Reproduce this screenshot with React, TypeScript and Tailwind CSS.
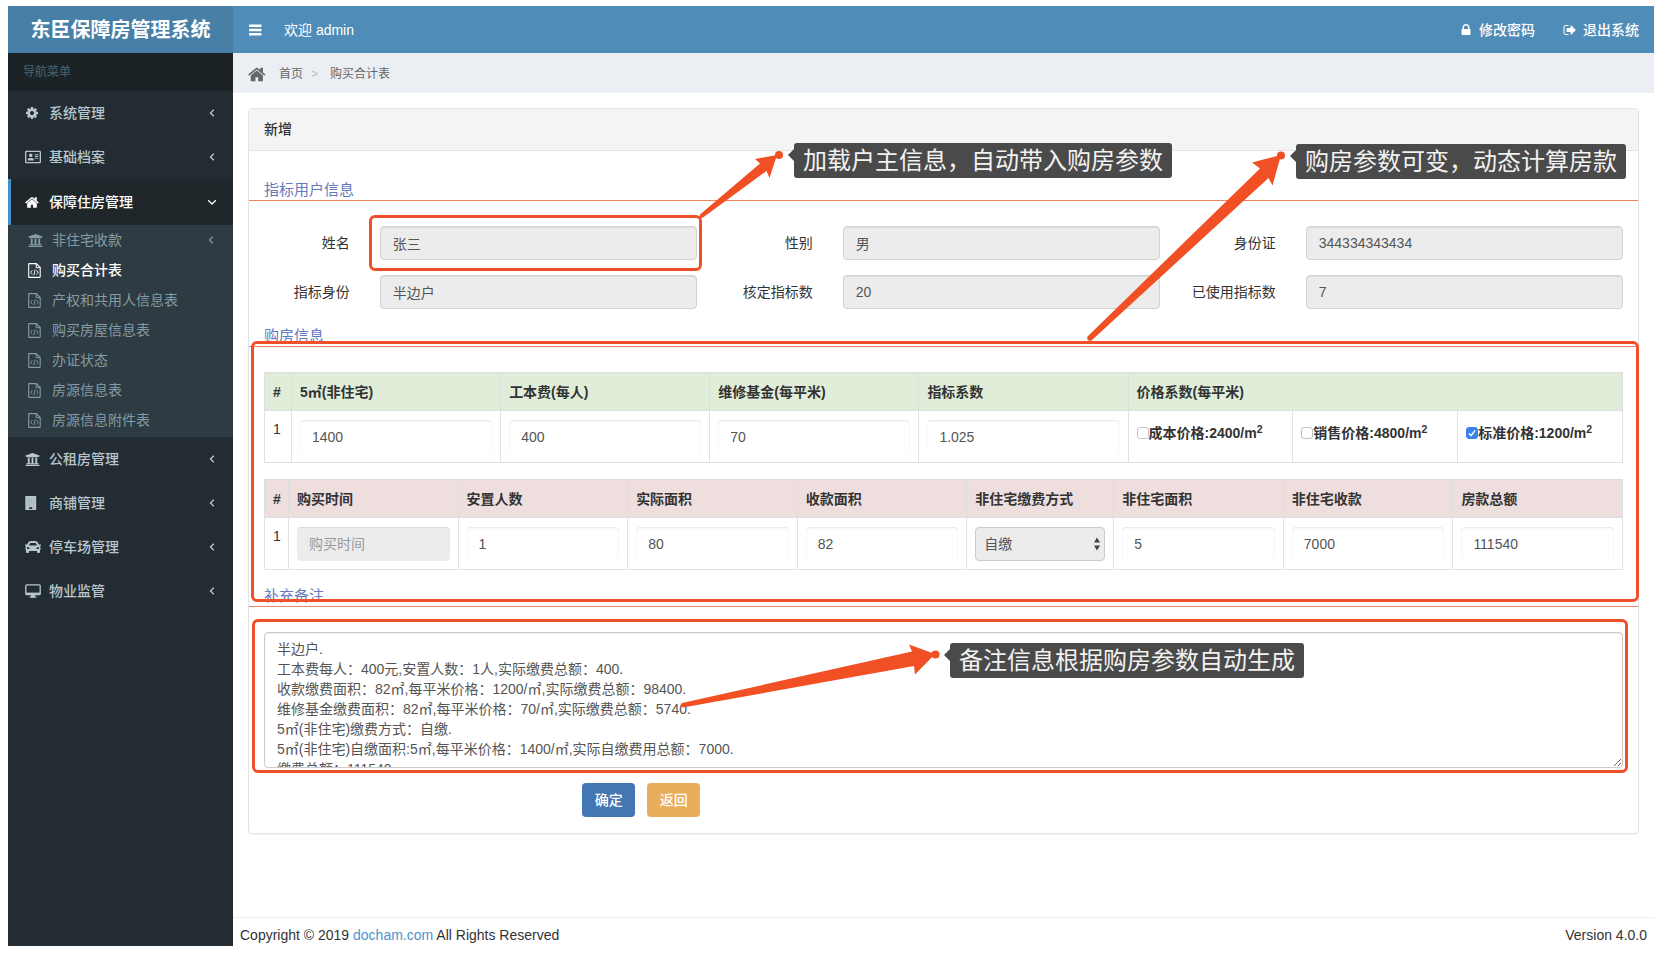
import type { ReactNode } from 'react';
import { FaCar, FaRegAddressCard, FaUniversity } from 'react-icons/fa';

type IconProps = { className?: string };

function Glyph({ d, className }: { d: string; className?: string }) {
  return (
    <svg viewBox="0 0 1792 1792" className={className} fill="currentColor" aria-hidden="true">
      <path d={d} />
    </svg>
  );
}

const HOME =
  'M1408 992v480q0 26-19 45t-45 19h-384v-384h-256v384h-384q-26 0-45-19t-19-45v-480q0-1 .5-3t.5-3l575-474 575 474q1 2 1 6zm223-69l-62 74q-8 9-21 11h-3q-13 0-21-7l-692-577-692 577q-12 8-24 7-13-2-21-11l-62-74q-8-10-7-23.5t11-21.5l719-599q32-26 76-26t76 26l244 204v-195q0-14 9-23t23-9h192q14 0 23 9t9 23v408l219 182q10 8 11 21.5t-7 23.5z';
const COG =
  'M1152 896q0-106-75-181t-181-75-181 75-75 181 75 181 181 75 181-75 75-181zm512-109v222q0 12-8 23t-20 13l-185 28q-19 54-39 91 35 50 107 138 10 12 10 25t-9 23q-27 37-99 108t-94 71q-12 0-26-9l-138-108q-44 23-91 38-16 136-29 186-7 28-36 28h-222q-14 0-24.5-8.5t-11.5-21.5l-28-184q-49-16-90-37l-141 107q-10 9-25 9-14 0-25-11-126-114-165-168-7-10-7-23 0-12 8-23 15-21 51-66.5t54-70.5q-27-50-41-99l-183-27q-13-2-21-12.5t-8-23.5v-222q0-12 8-23t19-13l186-28q14-46 39-92-40-57-107-138-10-12-10-24 0-10 9-23 26-36 98.5-107.5t94.5-71.5q13 0 26 10l138 107q44-23 91-38 16-136 29-186 7-28 36-28h222q14 0 24.5 8.5t11.5 21.5l28 184q49 16 90 37l142-107q9-9 24-9 13 0 25 10 129 119 165 170 7 8 7 22 0 12-8 23-15 21-51 66.5t-54 70.5q26 50 41 98l183 28q13 2 21 12.5t8 23.5z';
const LOCK =
  'M640 768h512v-192q0-106-75-181t-181-75-181 75-75 181v192zm832 96v576q0 40-28 68t-68 28h-960q-40 0-68-28t-28-68v-576q0-40 28-68t68-28h32v-192q0-184 132-316t316-132 316 132 132 316v192h32q40 0 68 28t28 68z';
const SIGN_OUT =
  'M704 1440q0 4 1 20t.5 26.5-3 23.5-10 19.5-20.5 6.5h-320q-119 0-203.5-84.5t-84.5-203.5v-704q0-119 84.5-203.5t203.5-84.5h320q13 0 22.5 9.5t9.5 22.5q0 4 1 20t.5 26.5-3 23.5-10 19.5-20.5 6.5h-320q-66 0-113 47t-47 113v704q0 66 47 113t113 47h312l11.5 1 11.5 3 8 5.5 7 9 2 13.5zm928-544q0 26-19 45l-544 544q-19 19-45 19t-45-19-19-45v-288h-448q-26 0-45-19t-19-45v-384q0-26 19-45t45-19h448v-288q0-26 19-45t45-19 45 19l544 544q19 19 19 45z';

const HomeIcon = ({ className }: IconProps) => <Glyph d={HOME} className={className} />;
const CogIcon = ({ className }: IconProps) => <Glyph d={COG} className={className} />;

function BarsIcon({ className }: IconProps) {
  return (
    <svg viewBox="0 0 14 14" className={className} fill="currentColor" aria-hidden="true">
      <rect x="1" y="1.500" width="12.500" height="2.500" rx="0.500" />
      <rect x="1" y="5.800" width="12.500" height="2.500" rx="0.500" />
      <rect x="1" y="10.100" width="12.500" height="2.500" rx="0.500" />
    </svg>
  );
}

function DesktopIcon({ className }: IconProps) {
  return (
    <svg viewBox="0 0 16 14" className={className} fill="none" stroke="currentColor" aria-hidden="true">
      <rect x="0.8" y="0.8" width="14.4" height="9.9" rx="1" strokeWidth="1.3" />
      <path d="M0.8 9.6h14.4" strokeWidth="2" />
      <path d="M6.2 10.5h3.6l.4 2.6H5.8z" fill="currentColor" stroke="none" />
      <path d="M4.6 13.2h6.8" strokeWidth="1.2" />
    </svg>
  );
}

function BuildingIcon({ className }: IconProps) {
  return (
    <svg viewBox="0 0 14 14" className={className} aria-hidden="true">
      <path
        fillRule="evenodd"
        fill="currentColor"
        d="M.9 0h9.700q.6 0 .6.6v12.800q0 .6-.6.6H.9q-.6 0-.6-.6V.6Q.3 0 .9 0zM4.200 11.200V13h3.100v-1.800z"
      />
      <path
        stroke="#232c33"
        strokeOpacity="0.45"
        strokeWidth="0.7"
        strokeDasharray="0.8 1.300"
        d="M2.300 2.500h7.200M2.300 4.700h7.200M2.300 6.900h7.200M2.300 9.100h7.200"
      />
    </svg>
  );
}

function FileCodeIcon({ className }: IconProps) {
  return (
    <svg viewBox="0 0 13 15" className={className} fill="none" stroke="currentColor" aria-hidden="true">
      <path d="M1.300.6h7l3.900 3.900v9.300q0 .6-.6.6H1.300q-.6 0-.6-.6V1.200q0-.6.6-.6z" strokeWidth="1.1" />
      <path d="M8.200.7v4h4" strokeWidth="1" />
      <path d="M4.300 7.200 2.800 9.300l1.500 2.100M8.600 7.200l1.500 2.100-1.500 2.100M7.100 6.400l-1.200 5.800" strokeWidth="0.900" />
    </svg>
  );
}

function Chevron({ open = false }: { open?: boolean }) {
  return (
    <svg
      viewBox="0 0 10 10"
      className="ml-auto size-2.5 shrink-0"
      fill="none"
      stroke="currentColor"
      strokeWidth="1.3"
      aria-hidden="true"
    >
      <path d={open ? 'M1.2 3.2 5 7l3.8-3.8' : 'M6.800 1.800 3.500 5l3.300 3.200'} />
    </svg>
  );
}

type Entry = { label: string; icon: (p: IconProps) => ReactNode; iconClass: string };

const before: Entry[] = [
  { label: '系统管理', icon: CogIcon, iconClass: 'size-3.5' },
  { label: '基础档案', icon: (p) => <FaRegAddressCard {...p} />, iconClass: 'size-4' },
];
const after: Entry[] = [
  { label: '公租房管理', icon: (p) => <FaUniversity {...p} />, iconClass: 'size-[15px]' },
  { label: '商铺管理', icon: BuildingIcon, iconClass: 'size-3.5' },
  { label: '停车场管理', icon: (p) => <FaCar {...p} />, iconClass: 'size-4' },
  { label: '物业监管', icon: DesktopIcon, iconClass: 'size-4' },
];
const files = ['购买合计表', '产权和共用人信息表', '购买房屋信息表', '办证状态', '房源信息表', '房源信息附件表'];

function NavItem({ entry }: { entry: Entry }) {
  const Icon = entry.icon;
  return (
    <li>
      <a href="#" className="flex h-11 items-center pr-4 pl-[17px] font-medium text-[#b8c7ce]">
        <span className="flex w-6 shrink-0">
          <Icon className={entry.iconClass} />
        </span>
        {entry.label}
        <Chevron />
      </a>
    </li>
  );
}

function Sidebar() {
  return (
    <aside className="flex w-[225px] shrink-0 flex-col bg-[#232c33]">
      <a href="#" className="flex h-[47px] items-center justify-center bg-[#477fa6] text-xl font-bold text-white">
        东臣保障房管理系统
      </a>
      <nav>
        <h2 className="flex h-[38px] items-center bg-[#1b2327] px-[15px] text-xs text-[#4b646f]">导航菜单</h2>
        <ul>
          {before.map((e) => (
            <NavItem key={e.label} entry={e} />
          ))}
          <li>
            <a
              href="#"
              className="flex h-[46px] items-center border-l-[3px] border-[#4590c4] bg-[#1f272b] pr-4 pl-3.5 font-medium text-white"
            >
              <span className="flex w-6 shrink-0">
                <HomeIcon className="size-[15px]" />
              </span>
              保障住房管理
              <Chevron open />
            </a>
            <ul className="bg-[#2e3b42] pb-0.5 text-[#849ba5]">
              <li>
                <a href="#" className="flex h-[30px] items-center pr-[17px] pl-5">
                  <span className="flex w-6 shrink-0">
                    <FaUniversity className="size-[15px]" />
                  </span>
                  非住宅收款
                  <Chevron />
                </a>
              </li>
              {files.map((label, i) => (
                <li key={label}>
                  <a
                    href="#"
                    className={
                      i === 0
                        ? 'flex h-[30px] items-center pl-5 font-medium text-white'
                        : 'flex h-[30px] items-center pl-5'
                    }
                  >
                    <span className="flex w-6 shrink-0">
                      <FileCodeIcon className="h-[15px] w-[13px]" />
                    </span>
                    {label}
                  </a>
                </li>
              ))}
            </ul>
          </li>
          {after.map((e) => (
            <NavItem key={e.label} entry={e} />
          ))}
        </ul>
      </nav>
    </aside>
  );
}

function Legend({ children }: { children: ReactNode }) {
  return (
    <h3 className="border-b border-[#f0825f] px-[15px] text-[15px] leading-5 text-[#6579bd]">{children}</h3>
  );
}

function Field({ id, label, value, marked = false }: { id: string; label: string; value: string; marked?: boolean }) {
  return (
    <div className="flex items-center">
      <label htmlFor={id} className="w-1/4 pr-[15px] text-right text-[#333]">
        {label}
      </label>
      <div className="relative w-3/4 px-[15px]">
        <input
          id={id}
          disabled
          defaultValue={value}
          className="block h-[34px] w-full rounded border border-[#d2d2d2] bg-[#ececec] px-3 text-[#555] shadow-[inset_0_1px_1px_rgba(0,0,0,0.075)]"
        />
        {marked && (
          <div className="pointer-events-none absolute -inset-y-[11px] right-[10px] left-1 rounded-md border-[3px] border-[#ef5029]" />
        )}
      </div>
    </div>
  );
}

function CellInput({ label, value }: { label: string; value: string }) {
  return (
    <input
      aria-label={label}
      defaultValue={value}
      className="block h-[34px] w-full rounded border-0 bg-transparent px-3 text-[#555] shadow-[inset_0_1px_2px_rgba(0,0,0,0.1)]"
    />
  );
}

const th = 'h-[38px] border border-[#dcdfe0] px-2 text-left font-bold';
const td = 'h-[52px] border border-[#dfe2e6] px-2 align-middle';
const tdTop = 'h-[52px] border border-[#dfe2e6] px-2 pt-2 align-top';

const prices = [
  { id: 'cost', label: '成本价格:2400/m', checked: false },
  { id: 'sale', label: '销售价格:4800/m', checked: false },
  { id: 'standard', label: '标准价格:1200/m', checked: true },
];

function ParameterTable() {
  return (
    <table className="mb-4 w-full table-fixed border-collapse text-[#333]">
      <colgroup>
        <col className="w-[27px]" />
        <col className="w-[15.4%]" />
        <col className="w-[15.4%]" />
        <col className="w-[15.4%]" />
        <col className="w-[15.4%]" />
        <col />
        <col />
        <col />
      </colgroup>
      <thead className="bg-[#e0eed9]">
        <tr>
          <th className={th}>#</th>
          <th className={th}>5㎡(非住宅)</th>
          <th className={th}>工本费(每人)</th>
          <th className={th}>维修基金(每平米)</th>
          <th className={th}>指标系数</th>
          <th className={th} colSpan={3}>
            价格系数(每平米)
          </th>
        </tr>
      </thead>
      <tbody>
        <tr>
          <td className={tdTop}>1</td>
          <td className={td}>
            <CellInput label="5㎡(非住宅)" value="1400" />
          </td>
          <td className={td}>
            <CellInput label="工本费(每人)" value="400" />
          </td>
          <td className={td}>
            <CellInput label="维修基金(每平米)" value="70" />
          </td>
          <td className={td}>
            <CellInput label="指标系数" value="1.025" />
          </td>
          {prices.map((p) => (
            <td key={p.id} className={tdTop}>
              <div className="flex items-center pt-1">
                <span className="relative flex shrink-0">
                  <input
                    id={p.id}
                    type="checkbox"
                    defaultChecked={p.checked}
                    className="peer size-3 appearance-none rounded-[3px] border border-[#c4c4c4] bg-white checked:border-[#3b82f0] checked:bg-[#3b82f0]"
                  />
                  <svg
                    viewBox="0 0 12 12"
                    className="pointer-events-none absolute inset-0 hidden size-3 peer-checked:block"
                    aria-hidden="true"
                  >
                    <path d="M3 6.4 5.2 8.7 9 3.4" fill="none" stroke="#fff" strokeWidth="1.5" />
                  </svg>
                </span>
                <label htmlFor={p.id} className="font-bold whitespace-nowrap">
                  {p.label}
                  <sup>2</sup>
                </label>
              </div>
            </td>
          ))}
        </tr>
      </tbody>
    </table>
  );
}

function PurchaseTable() {
  return (
    <table className="w-full table-fixed border-collapse text-[#333]">
      <colgroup>
        <col className="w-6" />
        <col />
        <col />
        <col />
        <col />
        <col className="w-[147px]" />
        <col />
        <col />
        <col />
      </colgroup>
      <thead className="bg-[#eedede]">
        <tr>
          <th className={th}>#</th>
          <th className={th}>购买时间</th>
          <th className={th}>安置人数</th>
          <th className={th}>实际面积</th>
          <th className={th}>收款面积</th>
          <th className={th}>非住宅缴费方式</th>
          <th className={th}>非住宅面积</th>
          <th className={th}>非住宅收款</th>
          <th className={th}>房款总额</th>
        </tr>
      </thead>
      <tbody>
        <tr>
          <td className={tdTop}>1</td>
          <td className={td}>
            <input
              aria-label="购买时间"
              placeholder="购买时间"
              readOnly
              className="block h-[34px] w-full rounded bg-[#ececec] px-3 shadow-[inset_0_1px_1px_rgba(0,0,0,0.075)] placeholder:text-[#999]"
            />
          </td>
          <td className={td}>
            <CellInput label="安置人数" value="1" />
          </td>
          <td className={td}>
            <CellInput label="实际面积" value="80" />
          </td>
          <td className={td}>
            <CellInput label="收款面积" value="82" />
          </td>
          <td className={td}>
            <div className="relative">
              <select
                aria-label="非住宅缴费方式"
                disabled
                className="block h-[34px] w-full appearance-none rounded border border-[#ccc] bg-[#ececec] px-2 text-[#555] opacity-100"
              >
                <option>自缴</option>
              </select>
              <svg
                viewBox="0 0 6 14"
                className="pointer-events-none absolute top-2.5 right-[5px] h-3.5 w-1.5"
                fill="#444"
                aria-hidden="true"
              >
                <path d="M3 0.5 6 5.5H0zM3 13.5 0 8.5h6z" />
              </svg>
            </div>
          </td>
          <td className={td}>
            <CellInput label="非住宅面积" value="5" />
          </td>
          <td className={td}>
            <CellInput label="非住宅收款" value="7000" />
          </td>
          <td className={td}>
            <CellInput label="房款总额" value="111540" />
          </td>
        </tr>
      </tbody>
    </table>
  );
}

const remark = [
  '半边户.',
  '工本费每人：400元,安置人数：1人,实际缴费总额：400.',
  '收款缴费面积：82㎡,每平米价格：1200/㎡,实际缴费总额：98400.',
  '维修基金缴费面积：82㎡,每平米价格：70/㎡,实际缴费总额：5740.',
  '5㎡(非住宅)缴费方式：自缴.',
  '5㎡(非住宅)自缴面积:5㎡,每平米价格：1400/㎡,实际自缴费用总额：7000.',
  '缴费总额：111540.',
].join('\n');

function Callout({ className, children }: { className: string; children: ReactNode }) {
  return (
    <div className={`pointer-events-none absolute flex items-center ${className}`}>
      <svg viewBox="0 0 6 12" className="mb-3 h-3 w-1.5" fill="#4a4a4a" aria-hidden="true">
        <path d="M6 0v12L0 6z" />
      </svg>
      <p className="flex h-[35px] items-center rounded-[3px] bg-[#4a4a4a] px-[9px] text-2xl whitespace-nowrap text-[#f2f2f2]">
        {children}
      </p>
    </div>
  );
}

export default function App() {
  return (
    <div className="relative min-h-screen bg-white pt-1.5 pr-[13px] pb-[9px] pl-2 font-['Liberation_Sans','Noto_Sans_CJK_SC',sans-serif] text-sm text-[#333]">
      <div className="flex min-h-[calc(100vh-15px)]">
        <Sidebar />
        <div className="flex min-w-0 flex-1 flex-col">
          <header className="flex h-[47px] items-center bg-[#508cb8] px-[15px] text-white">
            <button type="button" aria-label="切换导航" className="mr-[22px]">
              <BarsIcon className="size-3.5" />
            </button>
            <span>欢迎 admin</span>
            <div className="ml-auto flex gap-7">
              <a href="#" className="flex items-center gap-1.5 font-medium">
                <Glyph d={LOCK} className="size-3.5" />
                修改密码
              </a>
              <a href="#" className="flex items-center gap-1.5 font-medium">
                <Glyph d={SIGN_OUT} className="size-3.5" />
                退出系统
              </a>
            </div>
          </header>
          <nav className="flex h-10 items-center bg-[#ebeff4] px-[15px] pt-0.5 text-xs text-[#666]">
            <HomeIcon className="size-[19px]" />
            <a href="#" className="ml-3">
              首页
            </a>
            <span className="mx-2 text-[#bbb]">&gt;</span>
            <span className="ml-1">购买合计表</span>
          </nav>

          <main className="flex-1 p-[15px]">
            <form className="rounded border border-[#e3e3e3] shadow-[0_1px_1px_rgba(0,0,0,0.05)]">
              <h1 className="flex h-[42px] items-center rounded-t border-b border-[#e3e3e3] bg-[#f4f4f4] px-[15px] pb-0.5 font-medium">
                新增
              </h1>

              <section className="mt-[29px]">
                <Legend>指标用户信息</Legend>
                <div className="mt-[25px] grid grid-cols-3 gap-y-[15px]">
                  <Field id="name" label="姓名" value="张三" marked />
                  <Field id="gender" label="性别" value="男" />
                  <Field id="idcard" label="身份证" value="344334343434" />
                  <Field id="identity" label="指标身份" value="半边户" />
                  <Field id="approved" label="核定指标数" value="20" />
                  <Field id="used" label="已使用指标数" value="7" />
                </div>
              </section>

              <div className="relative mt-[17px]">
                <section>
                  <Legend>购房信息</Legend>
                  <div className="mt-[25px] px-[15px]">
                    <ParameterTable />
                    <PurchaseTable />
                  </div>
                </section>
                <div className="pointer-events-none absolute top-[15px] -right-px -bottom-8 left-0.5 z-10 rounded-md border-[3px] border-[#ef5029]" />
              </div>

              <section className="mt-4">
                <Legend>补充备注</Legend>
                <div className="relative mt-[25px] px-[15px]">
                  <textarea
                    aria-label="补充备注"
                    defaultValue={remark}
                    className="block h-[136px] w-full resize-y overflow-hidden rounded border border-[#ccc] px-3 py-1.5 leading-5 text-[#555] shadow-[inset_0_1px_1px_rgba(0,0,0,0.075)]"
                  />
                  <div className="pointer-events-none absolute -top-[13px] right-2.5 -bottom-[5px] left-[3px] rounded-md border-[3px] border-[#ef5029]" />
                </div>
              </section>

              <div className="mt-[15px] mb-4 flex gap-3 pl-[24%]">
                <button type="submit" className="h-[34px] w-[53px] rounded bg-[#4377b3] font-medium text-white">
                  确定
                </button>
                <button type="button" className="h-[34px] w-[53px] rounded bg-[#e8ae5c] font-medium text-white">
                  返回
                </button>
              </div>
            </form>
          </main>

          <footer className="flex h-[29px] items-start justify-between border-t border-[#eee] px-[7px] pt-[7px] leading-5">
            <p>
              Copyright © 2019{' '}
              <a href="#" className="text-[#4a95cc]">
                docham.com
              </a>{' '}
              All Rights Reserved
            </p>
            <p>Version 4.0.0</p>
          </footer>
        </div>
      </div>

      <svg
        viewBox="0 0 1667 955"
        className="pointer-events-none absolute top-0 left-0 z-20 h-[955px] w-[1667px] max-w-full"
        fill="#f05023"
        aria-hidden="true"
      >
        <path d="M700 214.5 760 163.5 755 159 777 155 769.5 178 766.5 171 703 217.5Q699 219 700 214.5Z" />
        <circle cx="779" cy="155" r="4" />
        <path d="M1087.500 336.500 1260 168.500 1252 162.500 1281 155 1272.500 185.500 1268.500 178 1091.500 340.500Q1086 342 1087.500 336.500Z" />
        <circle cx="1281" cy="155.500" r="4" />
        <path d="M682 703 912 651.500 909 644.500 935 654 915 674.500 914 666 683 707.500Q679 706 682 703Z" />
        <circle cx="935.500" cy="654.500" r="4" />
      </svg>
      <Callout className="top-[143px] left-[788px] z-20">加载户主信息，自动带入购房参数</Callout>
      <Callout className="top-36 left-[1290px] z-20">购房参数可变，动态计算房款</Callout>
      <Callout className="top-[643px] left-[944px] z-20">备注信息根据购房参数自动生成</Callout>
    </div>
  );
}
